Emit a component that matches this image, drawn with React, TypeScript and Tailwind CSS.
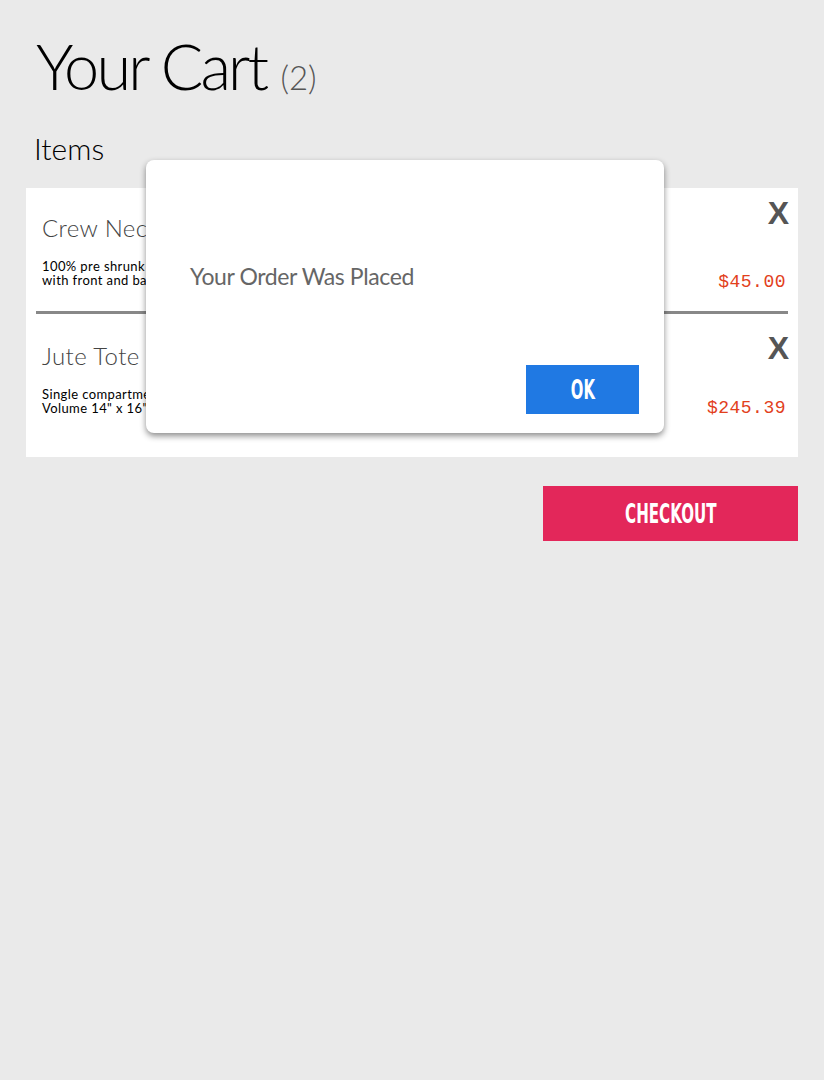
import React from 'react';

type Item = {
  id: number;
  name: string;
  lines: string[];
  price: string;
  pad: string;
  right: string;
};

const items: Item[] = [
  {
    id: 1,
    name: 'Crew Neck T-Shirt',
    lines: ['100% pre shrunk cotton tee', 'with front and back print'],
    price: '$45.00',
    pad: 'pt-[24px] pb-[24px]',
    right: 'pt-[10px] pb-[19px]',
  },
  {
    id: 2,
    name: 'Jute Tote Bag',
    lines: ['Single compartment, natural jute', 'Volume 14" x 16" x 6"'],
    price: '$245.39',
    pad: 'pt-[26px] pb-[42px]',
    right: 'pt-[19px] pb-[39px]',
  },
];

const sans = "font-['Lato','Noto_Sans',sans-serif]";
const bold = "font-['DejaVu_Sans',sans-serif] font-bold";

const CartRow = ({ item }: { item: Item }) => (
  <div className="flex justify-between">
    <div className={`pl-4 ${item.pad}`}>
      <h3 className={`${sans} text-[24px] leading-[32px] text-[#444] font-light tracking-[0.4px]`}>{item.name}</h3>
      <p className={`${sans} mt-[15px] text-[13px] leading-[14px] text-black tracking-[0.4px]`}>
        {item.lines[0]}
        <br />
        {item.lines[1]}
      </p>
    </div>
    <div className={`flex flex-col items-end justify-between pr-[9px] ${item.right}`}>
      <button className="font-['Liberation_Sans',sans-serif] text-[32px] leading-[30px] font-bold text-[#555]">
        X
      </button>
      <span className="pr-[3px] font-['Liberation_Mono',monospace] text-[18px] leading-[20px] text-[#e2401c] tracking-[0.5px]">
        {item.price}
      </span>
    </div>
  </div>
);

export default function App() {
  return (
    <div className="relative min-h-screen bg-[#eaeaea]">
      <div className="px-[26px] pt-[28px]">
        <h1 className={`${sans} pl-[10px] flex items-baseline gap-[14px] text-black`}>
          <span className="text-[63px] leading-[76px] font-light tracking-[-2.8px]">Your Cart</span>
          <span className="text-[33px] text-[#555] font-light">(2)</span>
        </h1>

        <h2 className={`${sans} pl-[8px] mt-[26px] text-[30px] leading-[36px] font-light text-black`}>Items</h2>

        <div className="mt-[22px] bg-white">
          <CartRow item={items[0]} />
          <div className="mx-[10px] h-[3px] bg-[#888]" />
          <CartRow item={items[1]} />
        </div>

        <div className="mt-[29px] flex justify-end">
          <button className="w-[255px] h-[55px] bg-[#e3275a] text-white flex items-center justify-center">
            <span className={`${bold} inline-block text-[26px] leading-none scale-x-[0.58]`}>CHECKOUT</span>
          </button>
        </div>
      </div>

      {/* order placed dialog */}
      <div className="absolute left-[146px] top-[160px] w-[518px] h-[273px] bg-white rounded-[8px] shadow-[0_3px_6px_rgba(0,0,0,0.45)] flex flex-col">
        <p className={`${sans} pl-[44px] pt-[100px] text-[23px] leading-[32px] text-[#666] tracking-[-0.4px]`}>
          Your Order Was Placed
        </p>
        <div className="mt-auto flex justify-end pr-[25px] pb-[19px]">
          <button className="w-[113px] h-[49px] bg-[#2079e3] text-white flex items-center justify-center">
            <span className={`${bold} inline-block text-[27px] leading-none scale-x-[0.55]`}>OK</span>
          </button>
        </div>
      </div>
    </div>
  );
}
